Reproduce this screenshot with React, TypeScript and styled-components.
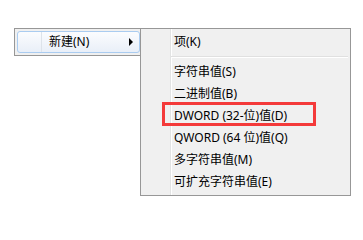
import { FC } from "react";
import styled, { createGlobalStyle } from "styled-components";

const GlobalStyle = createGlobalStyle`
  html, body {
    margin: 0;
    padding: 0;
    background: #ffffff;
  }
  body {
    font-family: "Noto Sans", "Noto Sans CJK SC", sans-serif;
    font-size: 12px;
    color: #000000;
  }
`;

const Stage = styled.div`
  display: flex;
  align-items: flex-start;
  padding: 28px 0 0 14px;
  width: 363px;
  height: 213px;
  box-sizing: border-box;
`;

const Menu = styled.div`
  box-sizing: border-box;
  background: #f0f0f0;
  border: 1px solid #979797;
`;

const ParentMenu = styled(Menu)`
  width: 127px;
  padding: 2px 0 2px 2px;
`;

const SubMenu = styled(Menu)`
  width: 211px;
  margin-left: -1px;
  padding: 2px 2px 2px 3px;
  background: linear-gradient(
    to right,
    #f0f0f0 29px,
    #e2e3e3 29px,
    #e2e3e3 30px,
    #ffffff 30px,
    #ffffff 31px,
    #f0f0f0 31px
  );
  position: relative;
  z-index: 1;
`;

const Item = styled.div<{ $active?: boolean; $marked?: boolean }>`
  position: relative;
  box-sizing: border-box;
  display: flex;
  align-items: center;
  height: 22px;
  padding-left: 30px;
  white-space: nowrap;
  line-height: 22px;

  ${({ $active }) =>
    $active &&
    `
    padding-left: 31px;
    border: 1px solid #aaccf0;
    border-radius: 3px;
    background: linear-gradient(to bottom, #fbfcfe, #e9eff8);
    line-height: 20px;

    &::before {
      content: "";
      position: absolute;
      left: 23px;
      top: 0;
      bottom: 0;
      width: 1px;
      background: #dde3ea;
    }
  `}

  ${({ $marked }) =>
    $marked &&
    `
    &::after {
      content: "";
      position: absolute;
      left: 18px;
      top: -3px;
      width: 154px;
      height: 24px;
      box-sizing: border-box;
      border: 3px solid #f43a3a;
      pointer-events: none;
    }
  `}
`;

const Arrow = styled.span`
  margin-left: auto;
  margin-right: 6px;
  width: 0;
  height: 0;
  border-left: 4px solid #000000;
  border-top: 4px solid transparent;
  border-bottom: 4px solid transparent;
`;

const Separator = styled.div`
  height: 8px;
  display: flex;
  flex-direction: column;
  justify-content: center;
  margin-left: 27px;

  &::before {
    content: "";
    height: 1px;
    background: #e0e0e0;
  }
  &::after {
    content: "";
    height: 1px;
    background: #ffffff;
  }
`;

const valueTypes = [
  { label: "字符串值(S)" },
  { label: "二进制值(B)" },
  { label: "DWORD (32-位)值(D)", marked: true },
  { label: "QWORD (64 位)值(Q)" },
  { label: "多字符串值(M)" },
  { label: "可扩充字符串值(E)" },
];

const App: FC = () => (
  <>
    <GlobalStyle />
    <Stage>
      <ParentMenu>
        <Item $active>
          新建(N)
          <Arrow />
        </Item>
      </ParentMenu>
      <SubMenu>
        <Item>项(K)</Item>
        <Separator />
        {valueTypes.map((v) => (
          <Item key={v.label} $marked={v.marked}>
            {v.label}
          </Item>
        ))}
      </SubMenu>
    </Stage>
  </>
);

export default App;
